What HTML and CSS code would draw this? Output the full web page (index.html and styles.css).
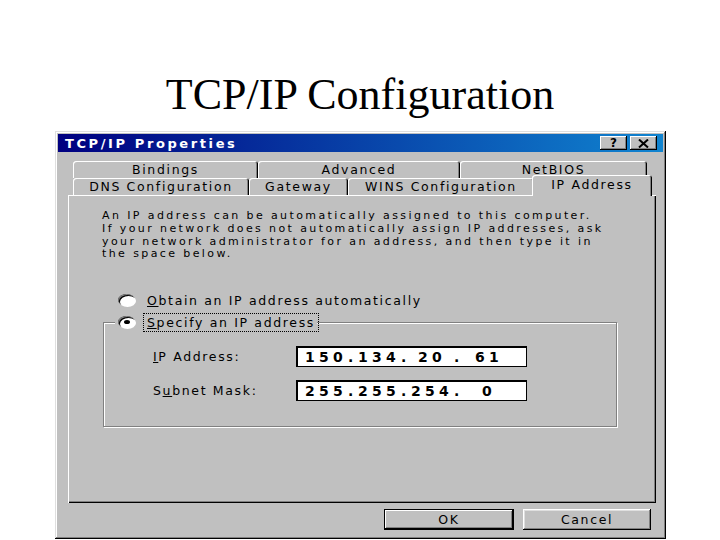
FILE: index.html
```html
<!DOCTYPE html>
<html lang="en">
<head>
  <meta charset="UTF-8" />
  <title>TCP/IP Configuration</title>
  <link rel="stylesheet" href="styles.css">
</head>
<body>
  <h1 class="slide-title">TCP/IP Configuration</h1>

  <div class="dialog">
    <div class="titlebar">
      <span class="title">TCP/IP Properties</span>
      <div class="title-buttons">
        <span class="tb-btn">?</span>
        <span class="tb-btn">
          <svg width="11" height="9" viewBox="0 0 11 9"><path d="M1 0.5 L10 8.5 M10 0.5 L1 8.5" stroke="#000" stroke-width="2"/></svg>
        </span>
      </div>
    </div>

    <div class="dialog-body">
      <div class="tabs">
        <div class="tab-row">
          <div class="tab w-bind">Bindings</div>
          <div class="tab w-adv">Advanced</div>
          <div class="tab w-net">NetBIOS</div>
        </div>
        <div class="tab-row">
          <div class="tab w-dns">DNS Configuration</div>
          <div class="tab w-gw">Gateway</div>
          <div class="tab w-wins">WINS Configuration</div>
          <div class="tab w-ip active">IP Address</div>
        </div>
      </div>

      <div class="panel">
        <p class="intro">An IP address can be automatically assigned to this computer.<br>If your network does not automatically assign IP addresses, ask<br>your network administrator for an address, and then type it in<br>the space below.</p>

        <div class="option first">
          <span class="radio"></span>
          <span class="label"><u>O</u>btain an IP address automatically</span>
        </div>

        <div class="group">
          <div class="option legend">
            <span class="radio checked"></span>
            <span class="label focus"><u>S</u>pecify an IP address</span>
          </div>

          <div class="field-row first">
            <span class="field-label"><u>I</u>P Address:</span>
            <div class="ip-box">
              <span class="octet">150</span><span class="dot">.</span><span class="octet">134</span><span class="dot">.</span><span class="octet">20</span><span class="dot">.</span><span class="octet">61</span>
            </div>
          </div>

          <div class="field-row">
            <span class="field-label">S<u>u</u>bnet Mask:</span>
            <div class="ip-box">
              <span class="octet">255</span><span class="dot">.</span><span class="octet">255</span><span class="dot">.</span><span class="octet">254</span><span class="dot">.</span><span class="octet">0</span>
            </div>
          </div>
        </div>
      </div>

      <div class="actions">
        <button class="btn default">OK</button>
        <button class="btn">Cancel</button>
      </div>
    </div>
  </div>
</body>
</html>
```

FILE: styles.css
```css
body { margin: 0; background: #fff; }

.slide-title {
  margin: 0 0 11px; padding-top: 70px; text-align: center;
  font: normal 44px/50px "Liberation Serif", "Times New Roman", serif; color: #000;
}

/* window */
.dialog {
  margin-left: 55px; width: 611px; height: 408px; box-sizing: border-box; padding: 3px;
  background: #c0c0c0; color: #000;
  box-shadow: inset -1px -1px #000, inset 1px 1px #dfdfdf, inset -2px -2px #808080, inset 2px 2px #fff;
  font-family: "DejaVu Sans", Verdana, sans-serif; font-size: 12.5px; letter-spacing: 1.65px;
}
.titlebar {
  height: 18px; display: flex; align-items: center; justify-content: space-between;
  padding: 0 6px 0 7px; background: linear-gradient(90deg, #000080 0%, #1084d0 100%);
}
.title { color: #fff; font-weight: bold; font-size: 13px; letter-spacing: 2.6px; }
.title-buttons { display: flex; gap: 3px; }
.tb-btn {
  width: 27px; height: 14px; display: flex; align-items: center; justify-content: center;
  background: #c0c0c0; font-weight: bold; font-size: 12px; letter-spacing: 0;
  box-shadow: inset -1px -1px #000, inset 1px 1px #fff, inset -2px -2px #808080;
}

.dialog-body { padding: 9px 7px 0 10px; }

/* tabs */
.tabs { padding-left: 5px; }
.tab-row { display: flex; height: 17px; }
.tab {
  box-sizing: border-box; height: 17px; line-height: 17px; text-align: center; white-space: nowrap;
  background: #c0c0c0; border-radius: 3px 3px 0 0;
  box-shadow: inset 1px 1px #fff, inset -1px 0 #000, inset -2px 0 #808080;
}
.w-bind { width: 185px; }
.w-adv { width: 202px; }
.w-net { width: 187px; }
.w-dns { width: 176px; }
.w-gw { width: 99px; }
.w-wins { width: 186px; }
.w-ip { width: 116px; }
.tab.active {
  position: relative; z-index: 1; height: 21px; line-height: 20px;
  width: 120px; margin: -3px -2px 0 -2px;
}

/* page */
.panel {
  height: 308px; box-sizing: border-box; padding: 15px 0 0 34px;
  box-shadow: inset 1px 1px #fff, inset -1px -1px #000, inset -2px -2px #808080;
}
.intro {
  margin: 0; font-size: 11px; letter-spacing: 2.4px; line-height: 12.75px; white-space: nowrap;
}

.option { display: flex; align-items: center; gap: 10px; height: 14px; white-space: nowrap; }
.option.first { margin: 32px 0 0 16px; }
.option .label { padding: 0 2px; }
.option .label.focus { outline: 1px dotted #000; outline-offset: 1px; }

.radio {
  width: 17px; height: 12px; border-radius: 50%; background: #fff;
  box-shadow: inset 1px 1px #808080, inset 2px 2px #000, 1px 1px #fff;
  display: flex; align-items: center; justify-content: center;
}
.radio.checked::after {
  content: ""; width: 6px; height: 4px; border-radius: 50%; background: #000;
}

.group {
  margin: 15px 0 0 1px; width: 514px; height: 105px; box-sizing: border-box;
  border: 1px solid #808080; box-shadow: 1px 1px #fff, inset 1px 1px #fff;
}
.option.legend {
  width: fit-content; margin: -8px 0 0 11px; padding-left: 3px; background: #c0c0c0;
}

.field-row { display: flex; align-items: center; margin: 13px 0 0 49px; }
.field-row.first { margin-top: 17px; }
.field-label { width: 143px; white-space: nowrap; }
.ip-box {
  width: 231px; height: 21px; box-sizing: border-box; display: flex; align-items: center;
  padding-left: 3px; background: #fff; border: 1px solid #000; box-shadow: inset 1px 1px #000;
  font-weight: bold; font-size: 14px; letter-spacing: 4.3px;
}
.octet { width: 48px; text-align: center; padding-left: 4px; box-sizing: border-box; }
.octet:last-child { padding-left: 12px; }
.dot { width: 5px; }

/* buttons */
.actions { display: flex; justify-content: flex-end; gap: 9px; padding-right: 5px; margin-top: 6px; }
.btn {
  width: 128px; height: 21px; padding: 0; border: none; background: #c0c0c0;
  font: inherit; letter-spacing: inherit; color: #000;
  box-shadow: inset -1px -1px #000, inset 1px 1px #fff, inset -2px -2px #808080, inset 2px 2px #dfdfdf;
}
.btn.default {
  width: 130px;
  box-shadow: inset 0 0 0 1px #000, inset -2px -2px #000, inset 2px 2px #fff, inset -3px -3px #808080;
}
```
